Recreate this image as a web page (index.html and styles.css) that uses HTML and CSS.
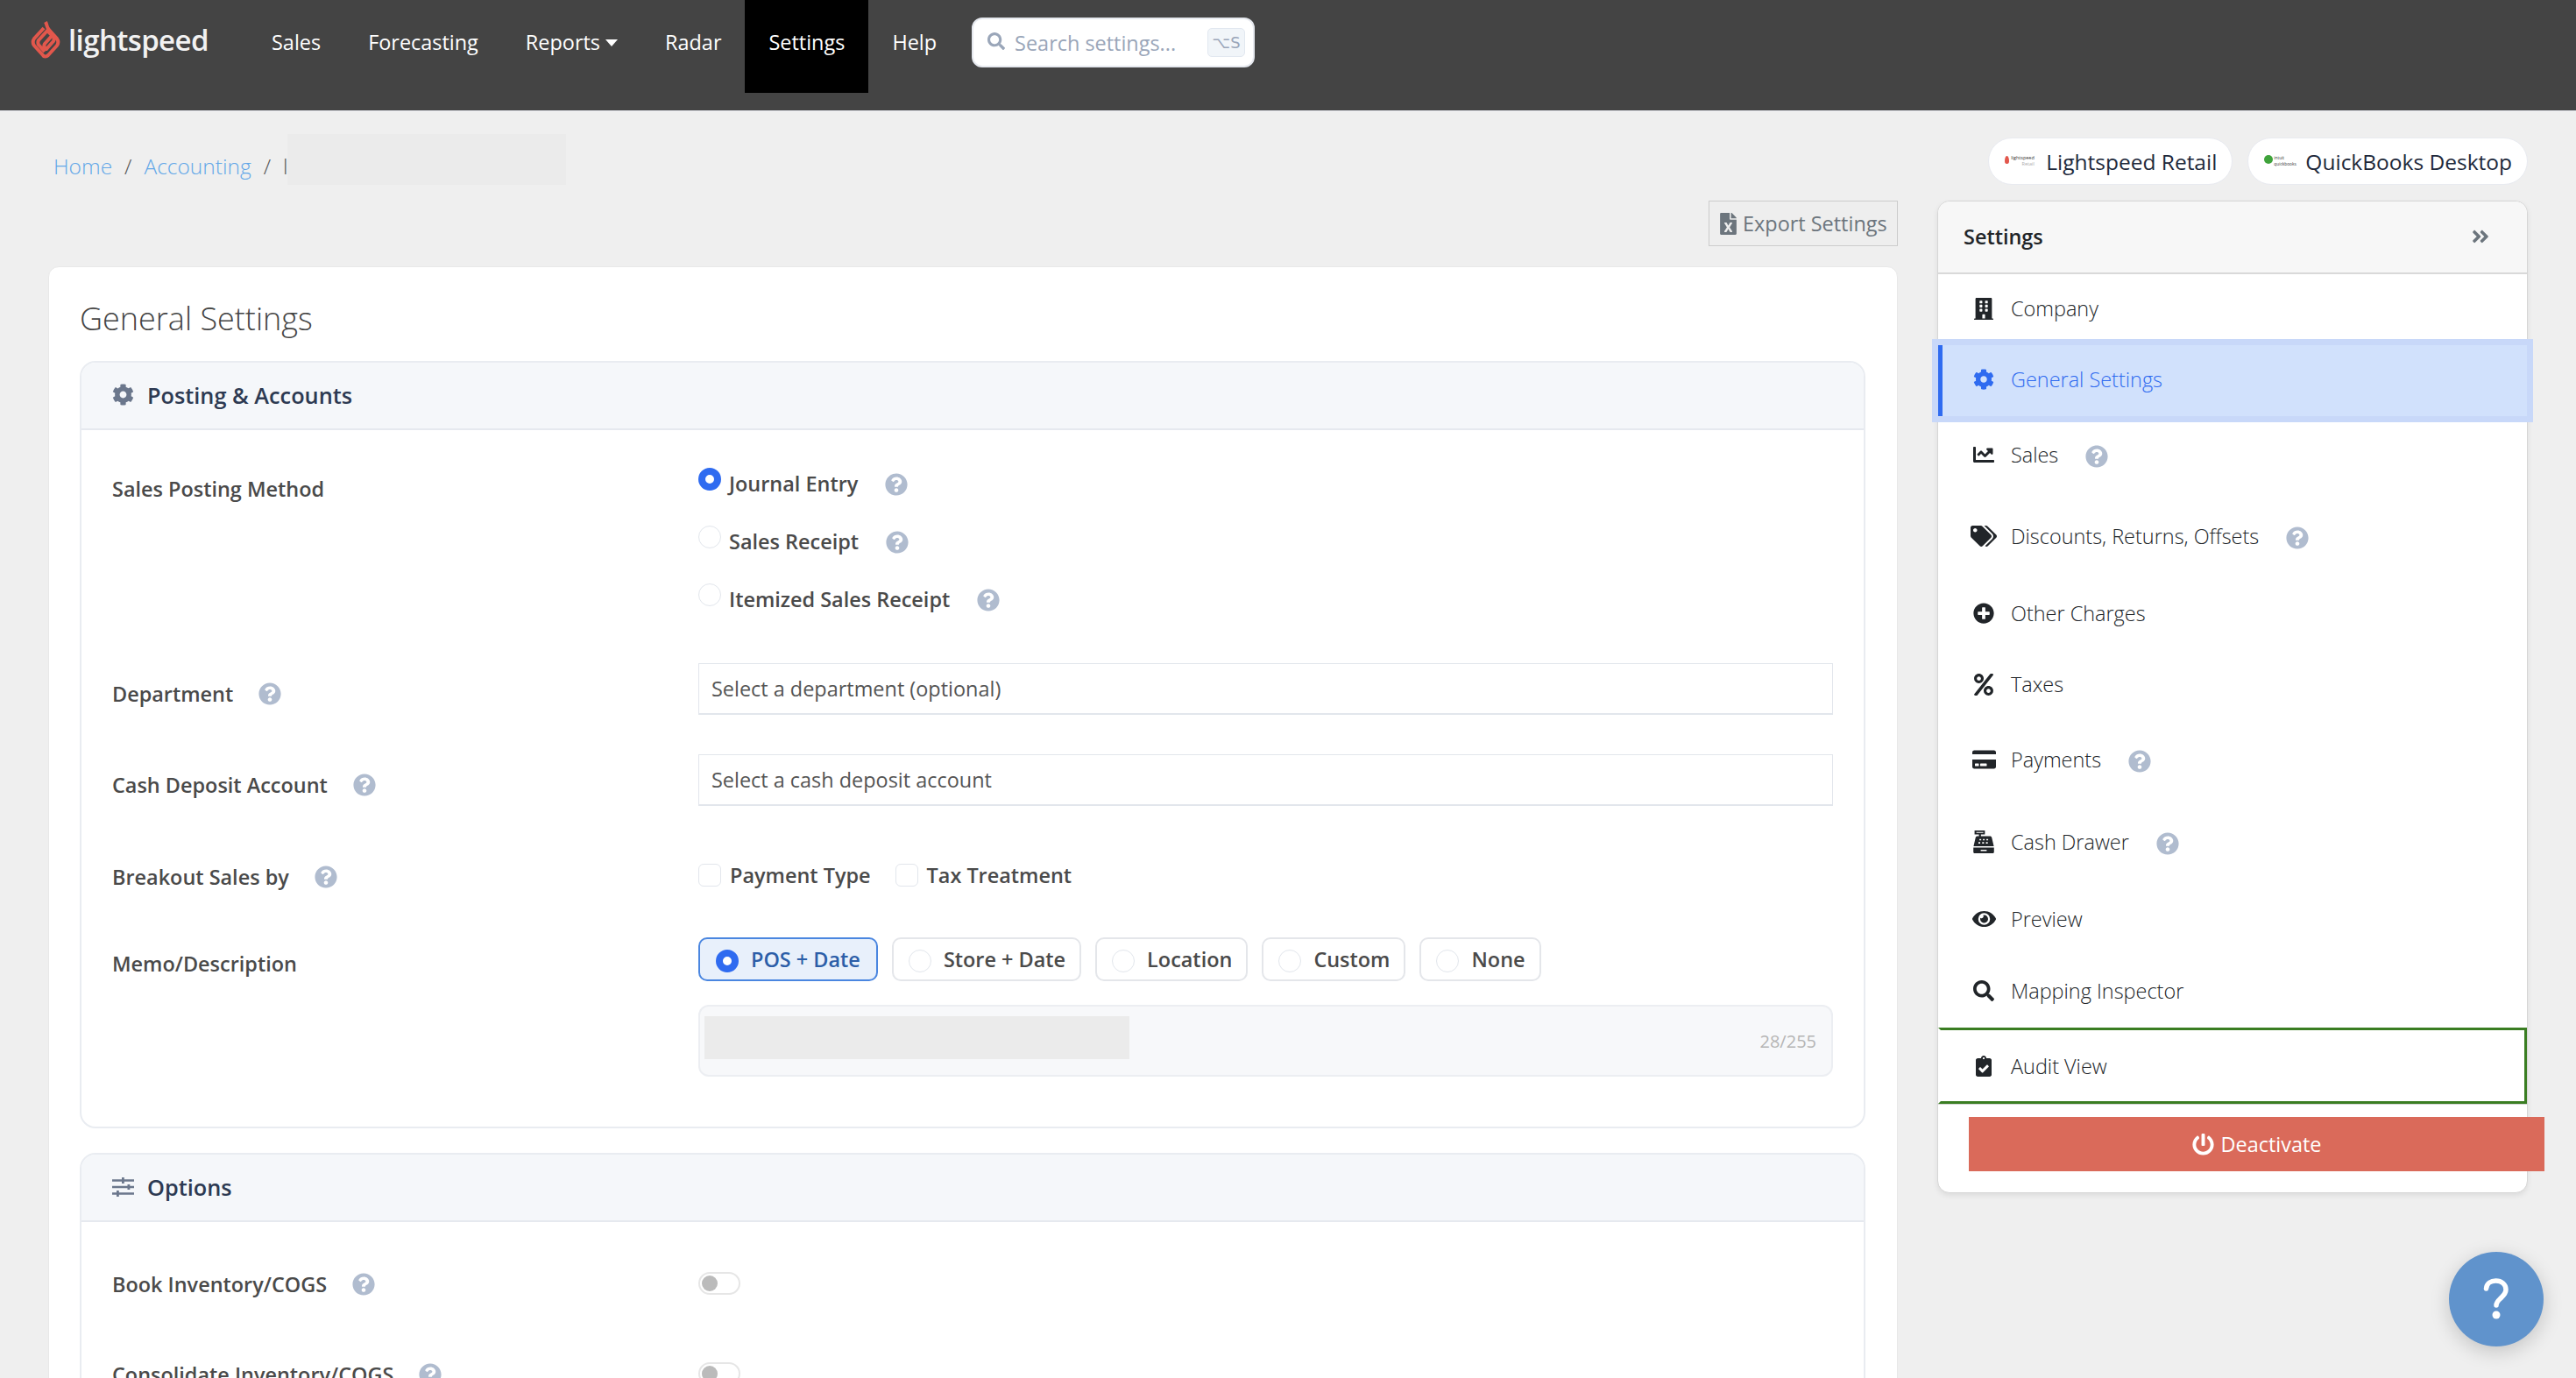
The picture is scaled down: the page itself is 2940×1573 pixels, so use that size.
FILE: index.html
```html
<!DOCTYPE html>
<html lang="en">

<head>
  <meta charset="UTF-8">
  <meta name="viewport" content="width=device-width, initial-scale=1.0">
  <title>General Settings</title>
  <link rel="stylesheet" href="styles.css">
</head>

<body>
  <svg class="sprite" xmlns="http://www.w3.org/2000/svg">
    <symbol id="i-cog" viewBox="0 0 512 512"><path d="M487.4 315.7l-42.6-24.6c4.3-23.2 4.3-47 0-70.2l42.6-24.6c4.9-2.8 7.1-8.6 5.5-14-11.1-35.6-30-67.8-54.7-94.6-3.8-4.1-10-5.1-14.8-2.3L380.8 110c-17.9-15.4-38.5-27.3-60.8-35.1V25.8c0-5.6-3.9-10.5-9.4-11.7-36.7-8.2-74.3-7.8-109.2 0-5.5 1.2-9.4 6.1-9.4 11.7V75c-22.2 7.9-42.8 19.8-60.8 35.1L88.7 85.5c-4.9-2.8-11-1.9-14.8 2.3-24.7 26.7-43.6 58.9-54.7 94.6-1.7 5.4.6 11.2 5.5 14L67.3 221c-4.3 23.2-4.3 47 0 70.2l-42.6 24.6c-4.9 2.8-7.1 8.6-5.5 14 11.1 35.6 30 67.8 54.7 94.6 3.8 4.1 10 5.1 14.8 2.3l42.6-24.6c17.9 15.4 38.5 27.3 60.8 35.1v49.2c0 5.6 3.9 10.5 9.4 11.7 36.7 8.2 74.3 7.8 109.2 0 5.5-1.2 9.4-6.1 9.4-11.7v-49.2c22.2-7.9 42.8-19.8 60.8-35.1l42.6 24.6c4.9 2.8 11 1.9 14.8-2.3 24.7-26.7 43.6-58.9 54.7-94.6 1.5-5.5-.7-11.3-5.6-14.1zM256 336c-44.1 0-80-35.9-80-80s35.9-80 80-80 80 35.9 80 80-35.9 80-80 80z"/></symbol>
    <symbol id="i-help" viewBox="0 0 512 512"><path d="M504 256c0 136.997-111.043 248-248 248S8 392.997 8 256C8 119.083 119.043 8 256 8s248 111.083 248 248zM262.655 90c-54.497 0-89.255 22.957-116.549 63.758-3.536 5.286-2.353 12.415 2.715 16.258l34.699 26.31c5.205 3.947 12.621 3.008 16.665-2.122 17.864-22.658 30.113-35.797 57.303-35.797 20.429 0 45.698 13.148 45.698 32.958 0 14.976-12.363 22.667-32.534 33.976C247.128 238.528 216 254.941 216 296v4c0 6.627 5.373 12 12 12h56c6.627 0 12-5.373 12-12v-1.333c0-28.462 83.186-29.647 83.186-106.667 0-58.002-60.165-102-116.531-102zM256 338c-25.365 0-46 20.635-46 46 0 25.364 20.635 46 46 46s46-20.636 46-46c0-25.365-20.635-46-46-46z"/></symbol>
    <symbol id="i-search" viewBox="0 0 512 512"><path d="M505 442.7L405.3 343c-4.5-4.5-10.6-7-17-7H372c27.6-35.3 44-79.7 44-128C416 93.1 322.9 0 208 0S0 93.1 0 208s93.1 208 208 208c48.3 0 92.7-16.4 128-44v16.3c0 6.4 2.5 12.5 7 17l99.7 99.7c9.4 9.4 24.6 9.4 33.9 0l28.3-28.3c9.4-9.4 9.4-24.6.1-34zM208 336c-70.7 0-128-57.2-128-128 0-70.7 57.2-128 128-128 70.7 0 128 57.2 128 128 0 70.7-57.2 128-128 128z"/></symbol>
    <symbol id="i-building" viewBox="0 0 448 512"><path d="M436 480h-20V24c0-13.255-10.745-24-24-24H56C42.745 0 32 10.745 32 24v456H12c-6.627 0-12 5.373-12 12v20h448v-20c0-6.627-5.373-12-12-12zM128 76c0-6.627 5.373-12 12-12h40c6.627 0 12 5.373 12 12v40c0 6.627-5.373 12-12 12h-40c-6.627 0-12-5.373-12-12V76zm0 96c0-6.627 5.373-12 12-12h40c6.627 0 12 5.373 12 12v40c0 6.627-5.373 12-12 12h-40c-6.627 0-12-5.373-12-12v-40zm52 148h-40c-6.627 0-12-5.373-12-12v-40c0-6.627 5.373-12 12-12h40c6.627 0 12 5.373 12 12v40c0 6.627-5.373 12-12 12zm76 160h-64v-84c0-6.627 5.373-12 12-12h40c6.627 0 12 5.373 12 12v84zm64-172c0 6.627-5.373 12-12 12h-40c-6.627 0-12-5.373-12-12v-40c0-6.627 5.373-12 12-12h40c6.627 0 12 5.373 12 12v40zm0-96c0 6.627-5.373 12-12 12h-40c-6.627 0-12-5.373-12-12v-40c0-6.627 5.373-12 12-12h40c6.627 0 12 5.373 12 12v40zm0-96c0 6.627-5.373 12-12 12h-40c-6.627 0-12-5.373-12-12V76c0-6.627 5.373-12 12-12h40c6.627 0 12 5.373 12 12v40z"/></symbol>
    <symbol id="i-chart" viewBox="0 0 512 512"><path d="M496 384H64V80c0-8.84-7.16-16-16-16H16C7.16 64 0 71.16 0 80v336c0 17.67 14.33 32 32 32h464c8.84 0 16-7.16 16-16v-32c0-8.84-7.16-16-16-16zM464 96H345.94c-21.38 0-32.09 25.85-16.97 40.97l32.4 32.4L288 242.75l-73.37-73.37c-12.5-12.5-32.76-12.5-45.25 0l-68.69 68.69c-6.25 6.25-6.25 16.38 0 22.63l22.62 22.62c6.25 6.25 16.38 6.25 22.63 0L192 237.25l73.37 73.37c12.5 12.5 32.76 12.5 45.25 0l96-96 32.4 32.4c15.12 15.12 40.97 4.41 40.97-16.97V112c.01-8.84-7.15-16-15.99-16z"/></symbol>
    <symbol id="i-tags" viewBox="0 0 640 512"><path d="M497.941 225.941L286.059 14.059A48 48 0 0 0 252.118 0H48C21.49 0 0 21.49 0 48v204.118a48 48 0 0 0 14.059 33.941l211.882 211.882c18.744 18.745 49.136 18.746 67.882 0l204.118-204.118c18.745-18.745 18.745-49.137 0-67.882zM112 160c-26.51 0-48-21.49-48-48s21.49-48 48-48 48 21.49 48 48-21.49 48-48 48zm513.941 133.823L421.823 497.941c-18.745 18.745-49.137 18.745-67.882 0l-.36-.36L527.64 323.522c16.999-16.999 26.36-39.6 26.36-63.64s-9.362-46.641-26.36-63.64L331.397 0h48.721a48 48 0 0 1 33.941 14.059l211.882 211.882c18.745 18.745 18.745 49.137 0 67.882z"/></symbol>
    <symbol id="i-plus" viewBox="0 0 512 512"><path d="M256 8C119 8 8 119 8 256s111 248 248 248 248-111 248-248S393 8 256 8zm144 276c0 6.6-5.4 12-12 12h-92v92c0 6.6-5.4 12-12 12h-56c-6.6 0-12-5.4-12-12v-92h-92c-6.6 0-12-5.4-12-12v-56c0-6.6 5.4-12 12-12h92v-92c0-6.6 5.4-12 12-12h56c6.6 0 12 5.4 12 12v92h92c6.6 0 12 5.4 12 12v56z"/></symbol>
    <symbol id="i-percent" viewBox="0 0 448 512"><path d="M112 224c61.9 0 112-50.1 112-112S173.9 0 112 0 0 50.1 0 112s50.1 112 112 112zm0-160c26.5 0 48 21.5 48 48s-21.5 48-48 48-48-21.5-48-48 21.5-48 48-48zm224 224c-61.9 0-112 50.1-112 112s50.1 112 112 112 112-50.1 112-112-50.1-112-112-112zm0 160c-26.5 0-48-21.5-48-48s21.5-48 48-48 48 21.5 48 48-21.5 48-48 48zM392.3.2l31.6.1c19.4.1 30.9 21.8 20 37.9L77.4 501.6a23.95 23.95 0 0 1-20 10.4l-32.4-.1c-19.4-.1-30.9-21.8-20-37.9L372.3 10.5c4.5-6.6 12-10.3 20-10.3z"/></symbol>
    <symbol id="i-card" viewBox="0 0 576 512"><path d="M0 432c0 26.5 21.5 48 48 48h480c26.5 0 48-21.5 48-48V256H0v176zm192-68c0-6.6 5.4-12 12-12h136c6.6 0 12 5.4 12 12v40c0 6.6-5.4 12-12 12H204c-6.6 0-12-5.4-12-12v-40zm-128 0c0-6.6 5.4-12 12-12h72c6.6 0 12 5.4 12 12v40c0 6.6-5.4 12-12 12H76c-6.6 0-12-5.4-12-12v-40zM576 80v48H0V80c0-26.5 21.5-48 48-48h480c26.5 0 48 21.5 48 48z"/></symbol>
    <symbol id="i-register" viewBox="44 0 424 512" preserveAspectRatio="none"><path fill-rule="evenodd" d="M72 0h208v88H200v40h180c22 0 36 12 40 32l40 196H52L92 160c4-20 18-32 40-32h28V88H72zM108 32v24h140V32zM170 190v32h36v-32zm70 0v32h36v-32zm70 0v32h36v-32zM150 262v32h36v-32zm76 0v32h36v-32zm76 0v32h36v-32z"/><path fill-rule="evenodd" d="M48 384h416v96c0 18-14 32-32 32H80c-18 0-32-14-32-32zM196 432v32h120v-32z"/></symbol>
    <symbol id="i-eye" viewBox="0 0 576 512"><path d="M572.52 241.4C518.29 135.59 410.93 64 288 64S57.68 135.64 3.48 241.41a32.4 32.4 0 0 0 0 29.19C57.71 376.41 165.07 448 288 448s230.32-71.64 284.52-177.41a32.4 32.4 0 0 0 0-29.19zM288 400a144 144 0 1 1 144-144 143.93 143.93 0 0 1-144 144zm0-240a95.31 95.31 0 0 0-25.31 3.79 47.85 47.85 0 0 1-66.9 66.9A95.78 95.78 0 1 0 288 160z"/></symbol>
    <symbol id="i-clipboard" viewBox="0 0 384 512"><path d="M336 64h-80c0-35.3-28.7-64-64-64s-64 28.7-64 64H48C21.5 64 0 85.5 0 112v352c0 26.5 21.5 48 48 48h288c26.5 0 48-21.5 48-48V112c0-26.5-21.5-48-48-48zM192 40c13.3 0 24 10.7 24 24s-10.7 24-24 24-24-10.7-24-24 10.7-24 24-24zm121.2 231.8l-143 141.8c-4.7 4.7-12.3 4.6-17-.1l-82.6-83.3c-4.7-4.7-4.6-12.3.1-17L99.1 285c4.7-4.7 12.3-4.6 17 .1l46 46.4 106-105.2c4.7-4.7 12.3-4.6 17 .1l28.2 28.4c4.7 4.8 4.6 12.3-.1 17z"/></symbol>
    <symbol id="i-power" viewBox="0 0 512 512"><path d="M400 54.1c63 45 104 118.6 104 201.9 0 136.8-110.8 247.7-247.5 248C120 504.3 8.2 393 8 256.4 7.9 173.1 48.9 99.3 111.8 54.2c11.7-8.3 28-4.8 35 7.7L162.6 90c5.9 10.5 3.1 23.8-6.6 31-41.5 30.8-68 79.6-68 134.9-.1 92.3 74.5 168.1 168 168.1 91.6 0 168.6-74.2 168-169.1-.3-51.8-24.7-101.8-68.1-134-9.7-7.2-12.4-20.5-6.5-30.9l15.8-28.1c7-12.4 23.2-16.1 34.8-7.8zM296 264V24c0-13.3-10.7-24-24-24h-32c-13.3 0-24 10.7-24 24v240c0 13.3 10.7 24 24 24h32c13.3 0 24-10.7 24-24z"/></symbol>
    <symbol id="i-double" viewBox="0 0 448 512"><path d="M224.3 273l-136 136c-9.4 9.4-24.6 9.4-33.9 0l-22.6-22.6c-9.4-9.4-9.4-24.6 0-33.9l96.4-96.4-96.4-96.4c-9.4-9.4-9.4-24.6 0-33.9L54.3 103c9.4-9.4 24.6-9.4 33.9 0l136 136c9.5 9.4 9.5 24.6.1 34zm192-34l-136-136c-9.4-9.4-24.6-9.4-33.9 0l-22.6 22.6c-9.4 9.4-9.4 24.6 0 33.9l96.4 96.4-96.4 96.4c-9.4 9.4-9.4 24.6 0 33.9l22.6 22.6c9.4 9.4 24.6 9.4 33.9 0l136-136c9.4-9.2 9.4-24.4 0-33.8z"/></symbol>
    <symbol id="i-sliders" viewBox="0 0 25 22"><path d="M0 2.200h25v2.600H0zM0 9.700h25v2.600H0zM0 17.200h25v2.600H0z"/><path d="M11 0h2.800v7H11zM17.500 8h2.800v6h-2.800zM5 15h2.800v7H5z"/></symbol>
    <symbol id="i-excel" viewBox="0 0 384 512"><path d="M224 136V0H24C10.7 0 0 10.7 0 24v464c0 13.3 10.7 24 24 24h336c13.3 0 24-10.7 24-24V160H248c-13.2 0-24-10.8-24-24zm60.1 106.5L224 336l60.1 93.5c5.1 8-.6 18.5-10.1 18.5h-34.9c-4.4 0-8.5-2.4-10.6-6.3C208.9 405.5 192 373 192 373c-6.1 14.1-9.5 19-36.6 68.8-2.1 3.9-6.1 6.3-10.5 6.3H110c-9.5 0-15.2-10.5-10.1-18.5l60.3-93.5-60.3-93.5c-5.2-8 .6-18.5 10.1-18.5h34.8c4.4 0 8.5 2.4 10.6 6.3 26.1 48.8 20 33.6 36.6 68.5 0 0 6.1-11.7 36.6-68.5 2.1-3.9 6.2-6.3 10.6-6.3H274c9.5-.1 15.2 10.4 10.1 18.4zM384 121.9v6.1H256V0h6.1c6.4 0 12.5 2.5 17 7l97.9 98c4.5 4.5 7 10.6 7 16.9z"/></symbol>
  </svg>

  <header class="topbar">
    <a class="logo">
      <svg class="logo-mark" viewBox="0 0 34 46"><path fill="none" stroke="#e2574c" stroke-width="4" stroke-linejoin="round" d="M17 3c2 4 1 6 4 9l9 10c2 3 2 5 0 8L20 41c-2 2-5 2-6 0L4 30c-2-3-2-5 0-8L15 10M24 19l-8 9c-1 2-1 3 0 4l2 2 8-9c1-2 1-3 0-5l-7-7-10 11c-1 2-1 3 0 5l7 8"/></svg>
      <span class="logo-text">lightspeed</span>
    </a>
    <nav class="nav">
      <a class="nav-item">Sales</a>
      <a class="nav-item">Forecasting</a>
      <a class="nav-item">Reports<span class="caret"></span></a>
      <a class="nav-item">Radar</a>
      <a class="nav-item active">Settings</a>
      <a class="nav-item">Help</a>
    </nav>
    <div class="search">
      <svg class="search-icon"><use href="#i-search"/></svg>
      <span class="search-text">Search settings...</span>
      <kbd class="search-key">⌥S</kbd>
    </div>
  </header>

  <main class="content">
    <div class="top-row">
      <div class="breadcrumb">
        <a>Home</a><span class="sep">/</span><a>Accounting</a><span class="sep">/</span><span class="crumb-cut">l</span>
        <span class="redact crumb-redact"></span>
      </div>
      <div class="pills">
        <div class="app-pill">
          <div class="mini-logo">
            <span class="mini-flame"></span>
            <span class="mini-name">lightspeed<small>Retail</small></span>
          </div>
          Lightspeed Retail
        </div>
        <div class="app-pill">
          <div class="mini-logo">
            <span class="mini-dot"></span>
            <span class="mini-name mini-qb">intuit<small class="dark">quickbooks</small></span>
          </div>
          QuickBooks Desktop
        </div>
      </div>
    </div>

    <div class="columns">
      <section class="main-col">
        <div class="export-row">
          <button class="export-btn"><svg class="export-icon"><use href="#i-excel"/></svg>Export Settings</button>
        </div>

        <div class="card">
          <h1 class="card-title">General Settings</h1>

          <div class="section">
            <div class="section-head">
              <svg class="section-icon"><use href="#i-cog"/></svg>Posting &amp; Accounts
            </div>
            <div class="section-body">
              <div class="row row-posting">
                <div class="label label-posting">Sales Posting Method</div>
                <div class="control">
                  <div class="option"><span class="radio checked"></span>Journal Entry<svg class="help"><use href="#i-help"/></svg></div>
                  <div class="option"><span class="radio"></span>Sales Receipt<svg class="help"><use href="#i-help"/></svg></div>
                  <div class="option"><span class="radio"></span>Itemized Sales Receipt<svg class="help"><use href="#i-help"/></svg></div>
                </div>
              </div>

              <div class="row row-department">
                <div class="label label-input">Department<svg class="help"><use href="#i-help"/></svg></div>
                <div class="control"><div class="select">Select a department (optional)</div></div>
              </div>

              <div class="row row-cash">
                <div class="label label-input">Cash Deposit Account<svg class="help"><use href="#i-help"/></svg></div>
                <div class="control"><div class="select">Select a cash deposit account</div></div>
              </div>

              <div class="row row-breakout">
                <div class="label label-breakout">Breakout Sales by<svg class="help"><use href="#i-help"/></svg></div>
                <div class="control checks">
                  <div class="check"><span class="checkbox"></span>Payment Type</div>
                  <div class="check"><span class="checkbox"></span>Tax Treatment</div>
                </div>
              </div>

              <div class="row row-memo">
                <div class="label label-memo">Memo/Description</div>
                <div class="control">
                  <div class="memo-pills">
                    <div class="memo-pill selected"><span class="radio checked"></span>POS + Date</div>
                    <div class="memo-pill"><span class="radio"></span>Store + Date</div>
                    <div class="memo-pill"><span class="radio"></span>Location</div>
                    <div class="memo-pill"><span class="radio"></span>Custom</div>
                    <div class="memo-pill"><span class="radio"></span>None</div>
                  </div>
                  <div class="memo-box">
                    <span class="redact memo-redact"></span>
                    <span class="memo-count">28/255</span>
                  </div>
                </div>
              </div>
            </div>
          </div>

          <div class="section section-options">
            <div class="section-head">
              <svg class="section-icon sliders"><use href="#i-sliders"/></svg>Options
            </div>
            <div class="section-body options-body">
              <div class="row row-toggle">
                <div class="label">Book Inventory/COGS<svg class="help"><use href="#i-help"/></svg></div>
                <div class="control"><span class="toggle"></span></div>
              </div>
              <div class="row row-toggle">
                <div class="label">Consolidate Inventory/COGS<svg class="help"><use href="#i-help"/></svg></div>
                <div class="control"><span class="toggle"></span></div>
              </div>
            </div>
          </div>
        </div>
      </section>

      <aside class="sidebar">
        <div class="side-head">
          <span>Settings</span>
          <svg class="side-collapse"><use href="#i-double"/></svg>
        </div>
        <ul class="menu">
          <li class="menu-item"><span class="menu-icon"><svg class="w-22"><use href="#i-building"/></svg></span>Company</li>
          <li class="menu-item current"><span class="menu-icon"><svg class="w-24"><use href="#i-cog"/></svg></span>General Settings</li>
          <li class="menu-item has-help"><span class="menu-icon"><svg class="w-24"><use href="#i-chart"/></svg></span>Sales<svg class="help"><use href="#i-help"/></svg></li>
          <li class="menu-item has-help"><span class="menu-icon"><svg class="w-30"><use href="#i-tags"/></svg></span>Discounts, Returns, Offsets<svg class="help"><use href="#i-help"/></svg></li>
          <li class="menu-item"><span class="menu-icon"><svg class="w-24"><use href="#i-plus"/></svg></span>Other Charges</li>
          <li class="menu-item"><span class="menu-icon"><svg class="w-22"><use href="#i-percent"/></svg></span>Taxes</li>
          <li class="menu-item has-help extra"><span class="menu-icon"><svg class="w-27"><use href="#i-card"/></svg></span>Payments<svg class="help"><use href="#i-help"/></svg></li>
          <li class="menu-item has-help"><span class="menu-icon"><svg class="w-register"><use href="#i-register"/></svg></span>Cash Drawer<svg class="help"><use href="#i-help"/></svg></li>
          <li class="menu-item extra"><span class="menu-icon"><svg class="w-27"><use href="#i-eye"/></svg></span>Preview</li>
          <li class="menu-item"><span class="menu-icon"><svg class="w-24"><use href="#i-search"/></svg></span>Mapping Inspector</li>
          <li class="menu-item audit"><span class="menu-icon"><svg class="w-18"><use href="#i-clipboard"/></svg></span>Audit View</li>
        </ul>
        <div class="side-foot">
          <button class="deactivate"><svg class="power"><use href="#i-power"/></svg>Deactivate</button>
        </div>
      </aside>
    </div>
  </main>

  <button class="help-fab">
    <svg viewBox="0 0 30 48"><path fill="none" stroke="#fff" stroke-width="5.5" stroke-linecap="round" stroke-linejoin="round" d="M3.5 12C4 6 9 3 14.500 3 21 3 26 7 26 13c0 4-2 6-5 9-3 3-6 5-6 9"/><circle cx="15" cy="42" r="4.500" fill="#fff"/></svg>
  </button>
</body>

</html>
```

FILE: styles.css
```css
* {
  box-sizing: border-box;
}

html,
body {
  margin: 0;
  height: 100%;
  overflow: hidden;
}

body {
  background: #efefef;
  color: #212529;
  font-family: "Open Sans", "Liberation Sans", "DejaVu Sans", sans-serif;
  font-size: 23.44px;
}

.sprite {
  display: none;
}

svg {
  fill: currentColor;
  flex: none;
}

/* top bar */
.topbar {
  display: flex;
  align-items: flex-start;
  height: 127px;
  background: #444;
  border-bottom: 1px solid #e6e8ee;
}

.logo {
  display: flex;
  align-items: center;
  width: 283px;
  height: 90px;
  padding-left: 35px;
}

.logo-mark {
  width: 34px;
  height: 46px;
}

.logo-text {
  margin-left: 9px;
  color: #f2f2f2;
  font-size: 33px;
  font-weight: 600;
  letter-spacing: -0.6px;
}

.nav {
  display: flex;
}

.nav-item {
  display: flex;
  align-items: flex-start;
  height: 106px;
  padding: 0 27px;
  color: #fff;
  line-height: 97px;
}

.nav-item.active {
  background: #000;
}

.caret {
  width: 0;
  height: 0;
  margin: 45px 0 0 6px;
  border-top: 8px solid #fff;
  border-left: 7px solid transparent;
  border-right: 7px solid transparent;
}

.search {
  display: flex;
  align-items: center;
  width: 323px;
  height: 57px;
  margin: 20px 0 0 13px;
  padding: 0 9px 0 16px;
  background: #fff;
  border: 2px solid #e6e9ef;
  border-radius: 12px;
  color: #9aa6b9;
}

.search-icon {
  width: 20px;
  height: 20px;
  margin-bottom: 3px;
}

.search-text {
  margin-left: 11px;
  flex: 1;
}

.search-key {
  display: flex;
  align-items: center;
  justify-content: center;
  width: 43px;
  height: 33px;
  background: #f1f5f9;
  border: 1px solid #e2e8f0;
  border-radius: 5px;
  color: #9aa6b9;
  font-family: "DejaVu Sans", sans-serif;
  font-size: 18px;
}

/* page */
.content {
  padding: 30px 55px 0;
}

.top-row {
  display: flex;
  justify-content: space-between;
  height: 54px;
}

.breadcrumb {
  position: relative;
  display: flex;
  align-items: center;
  height: 64px;
  padding-left: 6px;
  color: #555;
  font-size: 24.5px;
  font-weight: 300;
}

.breadcrumb a {
  color: #62a7e8;
}

.sep {
  margin: 0 14px;
}

.redact {
  background: #ebebeb;
}

.crumb-redact {
  position: absolute;
  top: -4px;
  left: 273px;
  width: 318px;
  height: 58px;
}

.pills {
  display: flex;
  gap: 17px;
}

.app-pill {
  display: flex;
  align-items: center;
  height: 54px;
  padding: 0 17px 0 18px;
  background: #fff;
  border: 1px solid #e8eaf0;
  border-radius: 27px;
  color: #1e293b;
  font-size: 24.5px;
}

.mini-logo {
  display: flex;
  align-items: flex-start;
  width: 36px;
  margin-right: 11px;
}

.mini-flame {
  width: 5px;
  height: 9px;
  margin: 1px 2px 0 0;
  flex: none;
  background: #e2574c;
  border-radius: 50% 50% 50% 50% / 70% 70% 40% 40%;
}

.mini-dot {
  width: 10px;
  height: 10px;
  margin-right: 1px;
  flex: none;
  background: #3fa33b;
  border-radius: 50%;
}

.mini-name {
  display: flex;
  flex-direction: column;
  color: #333;
  font-size: 5.5px;
  line-height: 7px;
}

.mini-name small {
  color: #aaa;
  font-size: 5.5px;
  text-align: right;
}

.mini-qb,
.mini-name small.dark {
  color: #333;
  font-size: 4.8px;
}

.columns {
  display: flex;
  align-items: flex-start;
  gap: 45px;
  margin-top: 18px;
}

.main-col {
  width: 2111px;
  flex: none;
}

.export-row {
  display: flex;
  justify-content: flex-end;
}

.export-btn {
  display: flex;
  align-items: center;
  height: 52px;
  width: 216px;
  padding: 0 0 0 12px;
  background: #eee;
  border: 1px solid #ccc;
  color: #6c757d;
  font: inherit;
}

.export-icon {
  width: 19px;
  height: 25px;
  margin-right: 7px;
}

.card {
  margin-top: 23px;
  padding: 35px 36px 0 35px;
  background: #fff;
  border: 1px solid #e8e8e8;
  border-radius: 12px;
}

.card-title {
  margin: 0 0 24px;
  color: #444;
  font-size: 36px;
  font-weight: 300;
  line-height: 48px;
}

.section {
  border: 2px solid #e9ecf1;
  border-radius: 18px;
}

.section-options {
  margin-top: 28px;
}

.section-head {
  display: flex;
  align-items: center;
  height: 77px;
  padding: 0 0 2px 35px;
  background: #f5f7fa;
  border-bottom: 2px solid #e6e9ef;
  border-radius: 16px 16px 0 0;
  color: #2d3a52;
  font-size: 25.3px;
  font-weight: 600;
}

.section-icon {
  width: 25px;
  height: 25px;
  margin-right: 15px;
  color: #6b778c;
}

.section-icon.sliders {
  height: 22px;
}

.section-body {
  padding: 0 35px 57px;
}

.options-body {
  padding-top: 54px;
}

.row {
  display: flex;
}

.label {
  display: flex;
  align-items: center;
  align-self: flex-start;
  width: 669px;
  margin-top: -1px;
  flex: none;
  color: #4a4a4a;
  font-weight: 600;
  line-height: 36px;
}

.label .help {
  margin-left: 29px;
}

.control {
  flex: 1;
  color: #4a4a4a;
  font-weight: 600;
}

.help {
  width: 26px;
  height: 26px;
  color: #b0bccf;
}

.option {
  display: flex;
  align-items: flex-start;
  height: 66px;
  line-height: 52px;
}

.option .help {
  margin: 14px 0 0 31px;
}

.radio {
  width: 26px;
  height: 26px;
  flex: none;
  background: #fff;
  border: 1px solid #e2e6ec;
  border-radius: 50%;
}

.radio.checked {
  border: 8px solid #2f6bf0;
}

.option .radio {
  margin: 8px 9px 0 0;
}

.row-posting {
  padding-top: 35px;
}

.label-posting {
  padding-top: 15px;
}

.row-department {
  margin-top: 33px;
}

.row-cash {
  margin-top: 45px;
}

.label-input {
  padding-top: 18px;
}

.select {
  display: flex;
  align-items: center;
  height: 59px;
  padding-left: 14px;
  background: #fff;
  border: 1px solid #e2e6ec;
  border-bottom-width: 2px;
  color: #555;
  font-weight: 400;
}

.row-breakout {
  margin-top: 53px;
}

.label-breakout {
  padding-top: 11px;
}

.checks {
  display: flex;
  gap: 28px;
  height: 52px;
}

.check {
  display: flex;
  align-items: center;
}

.checkbox {
  width: 26px;
  height: 26px;
  margin-right: 10px;
  background: #fff;
  border: 1px solid #e2e6ec;
  border-radius: 6px;
}

.row-memo {
  margin-top: 45px;
}

.label-memo {
  padding-top: 13px;
}

.memo-pills {
  display: flex;
  gap: 16px;
}

.memo-pill {
  display: flex;
  align-items: center;
  height: 50px;
  padding: 0 16px 0 17px;
  background: #fff;
  border: 2px solid #e4e6ea;
  border-radius: 10px;
}

.memo-pill .radio {
  margin: 4px 14px 0 0;
}

.memo-pill.selected {
  padding: 0 18px;
  background: #e8f0fb;
  border-color: #4a86e0;
  color: #2c5ea8;
}

.memo-box {
  position: relative;
  height: 82px;
  margin-top: 27px;
  background: #f7f8fa;
  border: 2px solid #eceef2;
  border-radius: 12px;
}

.memo-redact {
  position: absolute;
  top: 11px;
  left: 5px;
  width: 485px;
  height: 49px;
}

.memo-count {
  position: absolute;
  top: 26px;
  right: 17px;
  color: #b5b5b5;
  font-size: 20px;
  font-weight: 400;
}

.row-toggle {
  height: 103px;
}

.toggle {
  position: relative;
  display: block;
  width: 48px;
  height: 26px;
  margin-top: 3px;
  background: #fff;
  border: 2px solid #e6e6e6;
  border-radius: 13px;
}

.toggle::after {
  content: "";
  position: absolute;
  top: 2px;
  left: 2px;
  width: 18px;
  height: 18px;
  background: #bbb;
  border-radius: 50%;
}

/* sidebar */
.sidebar {
  width: 674px;
  flex: none;
  background: #fff;
  border: 1px solid #d6d6d6;
  border-radius: 14px;
  box-shadow: 0 3px 6px rgba(0, 0, 0, 0.08);
}

.side-head {
  display: flex;
  align-items: center;
  justify-content: space-between;
  height: 83px;
  padding: 0 43px 2px 29px;
  background: #f7f7f7;
  border-bottom: 2px solid #d9d9d9;
  border-radius: 14px 14px 0 0;
  font-weight: 600;
}

.side-collapse {
  width: 20px;
  height: 24px;
  color: #6c757d;
}

.menu {
  margin: 0;
  padding: 0;
  list-style: none;
}

.menu-item {
  display: flex;
  align-items: center;
  height: 81px;
  padding: 0 0 3px 22px;
  font-weight: 300;
}

.menu-item.has-help {
  height: 93px;
  padding-bottom: 5px;
}

.menu-item.extra {
  margin-bottom: 1px;
}

.menu-item .help {
  margin: 4px 0 0 31px;
}

.menu-icon {
  display: flex;
  justify-content: center;
  width: 60px;
  margin-right: 1px;
}

.w-18 {
  width: 18px;
  height: 26px;
}

.w-22 {
  width: 22px;
  height: 25px;
}

.w-24 {
  width: 24px;
  height: 24px;
}

.w-register {
  width: 24px;
  height: 26px;
}

.w-27 {
  width: 27px;
  height: 24px;
}

.w-30 {
  width: 30px;
  height: 24px;
}

.menu-item.current {
  padding-left: 17px;
  background: #d1e1fc;
  border-left: 5px solid #2f6bf0;
  box-shadow: 0 0 0 7px #c8d8f9;
  color: #2f6bf0;
}

.menu-item.audit {
  height: 87px;
  padding: 0 0 0 19px;
  border: 3px solid #3a7d22;
  border-left-color: transparent;
}

.side-foot {
  padding: 14px 0 24px 35px;
  border-top: 1px solid #d6d6d6;
}

.deactivate {
  display: flex;
  align-items: center;
  justify-content: center;
  gap: 8px;
  width: 657px;
  height: 62px;
  background: #da6a5a;
  border: 0;
  color: #fff;
  font: inherit;
}

.power {
  width: 25px;
  height: 25px;
}

.help-fab {
  position: fixed;
  top: 1429px;
  left: 2795px;
  display: flex;
  align-items: center;
  justify-content: center;
  width: 108px;
  height: 108px;
  padding: 0;
  background: #6093cc;
  border: 0;
  border-radius: 50%;
  box-shadow: 0 6px 22px rgba(0, 0, 0, 0.18);
}

.help-fab svg {
  width: 30px;
  height: 48px;
}
```
